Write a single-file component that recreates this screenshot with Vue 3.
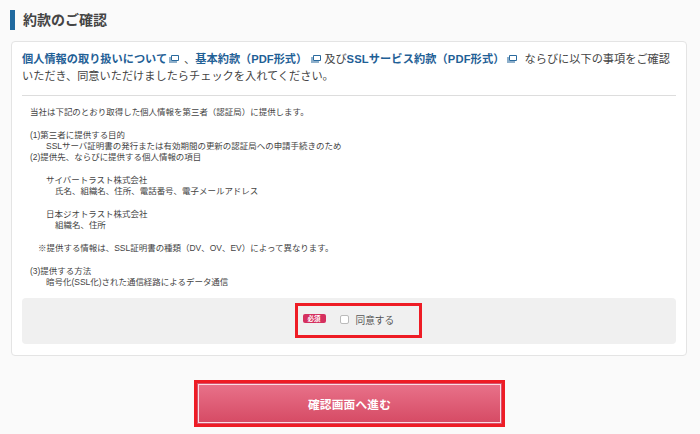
<template>
  <div class="page">
    <h2 class="title">約款のご確認</h2>

    <section class="card">
      <p class="lead">
        <a class="link">個人情報の取り扱いについて</a><svg class="ext" viewBox="0 0 10 8"><path d="M2.5 .5h7v5h-7z" fill="none" stroke="#2a6a9e" /><path d="M0 2h2v4h6v2H0z" fill="#8fb0cb" /></svg><span class="comma">、</span><a class="link">基本約款（PDF形式）</a><svg class="ext ext--mid" viewBox="0 0 10 8"><path d="M2.5 .5h7v5h-7z" fill="none" stroke="#2a6a9e" /><path d="M0 2h2v4h6v2H0z" fill="#8fb0cb" /></svg>及び<a class="link link--wide">SSLサービス約款（PDF形式）</a><svg class="ext ext--wide" viewBox="0 0 10 8"><path d="M2.5 .5h7v5h-7z" fill="none" stroke="#2a6a9e" /><path d="M0 2h2v4h6v2H0z" fill="#8fb0cb" /></svg>ならびに以下の事項をご確認いただき、同意いただけましたらチェックを入れてください。
      </p>

      <div class="terms">
        <p
          v-for="(line, index) in lines"
          :key="index"
          class="line"
          :class="'indent-' + line.indent"
        >{{ line.text || '\u00a0' }}</p>
      </div>

      <div class="agree">
        <label class="agree-box">
          <span class="badge">必須</span>
          <input type="checkbox" class="check" />
          <span class="agree-text">同意する</span>
        </label>
      </div>
    </section>

    <div class="actions">
      <div class="button-frame">
        <button type="button" class="submit">確認画面へ進む</button>
      </div>
    </div>
  </div>
</template>

<script setup>
// indent: 0 = none, 1 = note, 2 = sub item, 3 = detail
const lines = [
  { text: '当社は下記のとおり取得した個人情報を第三者（認証局）に提供します。', indent: 0 },
  { text: '', indent: 0 },
  { text: '(1)第三者に提供する目的', indent: 0 },
  { text: 'SSLサーバ証明書の発行または有効期間の更新の認証局への申請手続きのため', indent: 2 },
  { text: '(2)提供先、ならびに提供する個人情報の項目', indent: 0 },
  { text: '', indent: 0 },
  { text: 'サイバートラスト株式会社', indent: 2 },
  { text: '氏名、組織名、住所、電話番号、電子メールアドレス', indent: 3 },
  { text: '', indent: 0 },
  { text: '日本ジオトラスト株式会社', indent: 2 },
  { text: '組織名、住所', indent: 3 },
  { text: '', indent: 0 },
  { text: '※提供する情報は、SSL証明書の種類（DV、OV、EV）によって異なります。', indent: 1 },
  { text: '', indent: 0 },
  { text: '(3)提供する方法', indent: 0 },
  { text: '暗号化(SSL化)された通信経路によるデータ通信', indent: 2 }
]
</script>

<style>
html,
body {
  margin: 0;
  background: #fafafa;
}
</style>

<style scoped>
.page {
  width: 700px;
  height: 434px;
  overflow: hidden;
  box-sizing: border-box;
  padding: 10px 13px 0 11px;
  background: #fafafa;
  color: #444;
  font-family: "Liberation Sans", "Noto Sans CJK JP", sans-serif;
}
.title {
  margin: 0 0 11px -1px;
  height: 20px;
  padding-left: 8px;
  border-left: 5px solid #20699f;
  font-size: 14px;
  font-weight: bold;
  line-height: 20px;
  color: #444;
}
.card {
  box-sizing: border-box;
  height: 315px;
  padding: 9px 10px 0;
  background: #fff;
  border: 1px solid #e4e4e4;
  border-radius: 4px;
}
.lead {
  margin: 0;
  padding-bottom: 10px;
  border-bottom: 1px solid #ddd;
  font-size: 11.2px;
  line-height: 17px;
}
.link {
  color: #1f6096;
  font-weight: bold;
}
.link--wide {
  letter-spacing: 0.12px;
}
.comma {
  margin-left: 5px;
}
.ext {
  width: 10px;
  height: 8px;
  margin: 0 0 0 2px;
}
.ext--mid {
  margin: 0 3px 0 4px;
}
.ext--wide {
  margin: 0 8px 0 2px;
}
.terms {
  padding: 11px 8px 0;
  height: 202px;
  box-sizing: border-box;
}
.line {
  margin: 0;
  font-size: 8.48px;
  line-height: 11.33px;
}
.indent-1 {
  padding-left: 8px;
}
.indent-2 {
  padding-left: 16px;
}
.indent-3 {
  padding-left: 25px;
}
.agree {
  display: flex;
  justify-content: center;
  height: 46px;
  padding: 5px 0 0 18px;
  box-sizing: border-box;
  background: #f0f0f0;
  border-radius: 4px;
}
.agree-box {
  display: flex;
  align-items: center;
  box-sizing: border-box;
  width: 127px;
  height: 35px;
  padding: 0 0 2px 5px;
  border: 3px solid #ee1c25;
}
.badge {
  width: 23px;
  height: 9px;
  margin-top: -3px;
  border-radius: 2px;
  background: #d5305f;
  color: #fff;
  font-size: 6.5px;
  font-weight: bold;
  line-height: 9px;
  text-align: center;
}
.check {
  box-sizing: border-box;
  width: 9px;
  height: 9px;
  margin: 0 0 0 14px;
  appearance: none;
  background: #fff;
  border: 1px solid #bbb;
  border-radius: 2px;
}
.agree-text {
  margin-left: 7px;
  font-size: 9.7px;
  color: #555;
}
.actions {
  display: flex;
  justify-content: center;
  padding: 24px 0 0 1px;
}
.button-frame {
  box-sizing: border-box;
  width: 311px;
  height: 47px;
  border: 3px solid #ee1c25;
}
.submit {
  display: block;
  box-sizing: border-box;
  width: 100%;
  height: 100%;
  padding: 0;
  border: 1px solid #d9506c;
  box-shadow: inset 0 0 0 1px #fbdde3;
  background: linear-gradient(#e8728a, #d64a64);
  color: #fff;
  font-family: inherit;
  font-size: 11.7px;
  font-weight: bold;
  letter-spacing: 0.2px;
}
</style>
